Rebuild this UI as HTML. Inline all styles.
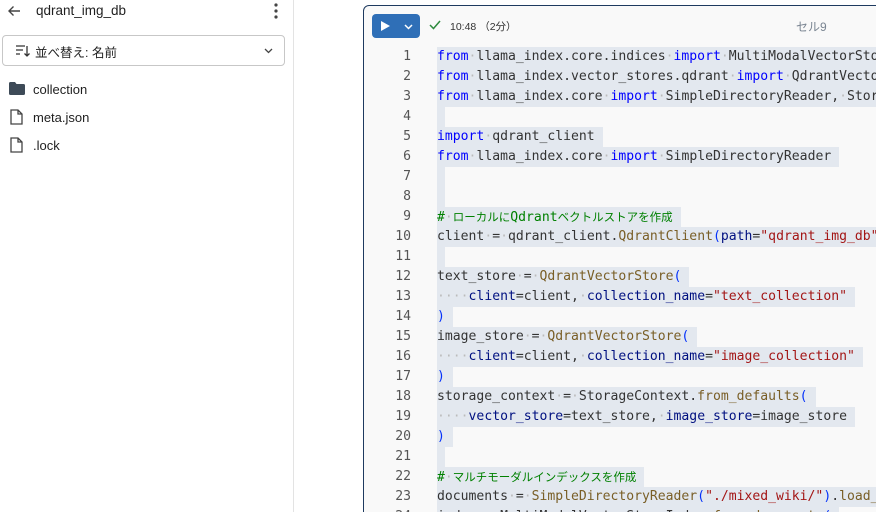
<!DOCTYPE html>
<html><head><meta charset="utf-8"><style>
*{margin:0;padding:0;box-sizing:border-box}
html,body{width:876px;height:512px;overflow:hidden}
body{background:#fff;font-family:"Liberation Sans","Noto Sans CJK JP",sans-serif;position:relative;color:#1f1f1f}
.left{position:absolute;left:0;top:0;width:294px;height:512px;border-right:1px solid #e3e3e3;background:#fff}
.title{position:absolute;left:36px;top:3px;font-size:13.5px;color:#1f1f1f}
.sort{position:absolute;left:2px;top:35px;width:283px;height:31px;border:1px solid #c7c7c7;border-radius:4px}
.sort span{position:absolute;left:32px;top:6px;font-size:12.5px}
.item{position:absolute;left:33px;font-size:13px}
.clip{position:absolute;left:0;top:0;width:876px;height:512px;overflow:hidden}
.cell{position:absolute;left:363px;top:5px;width:600px;height:600px;border:1.5px solid #1e3a5f;border-radius:6px;background:#f9f9f9}
.run{position:absolute;left:372px;top:14px;width:48px;height:24px;background:#2f6fb7;border-radius:4px}
.code{position:absolute;left:0;top:47px;font-family:"DejaVu Sans Mono","Noto Sans CJK JP",monospace;font-size:13.1px}
.ln{position:absolute;left:380px;width:31px;text-align:right;color:#555;height:20px;line-height:20px}
.cl{position:absolute;left:437px;height:20px;line-height:20px;white-space:pre;background:#e3e8ef;padding-right:8px;color:#333}
.e{width:8px;padding:0}
.j{font-size:11.5px}
.k{color:#0000ff}.f{color:#795e26}.p{color:#001080}.s{color:#a31515}.c{color:#008000}.b{color:#0431fa}.d{color:#bbb}
</style></head><body>
<div class="left">
<svg style="position:absolute;left:7px;top:5px" width="14" height="12" viewBox="0 0 14 12"><path d="M13 6H2M6.5 1.5L2 6l4.5 4.5" stroke="#444" stroke-width="1.4" fill="none"/></svg>
<div class="title">qdrant_img_db</div>
<svg style="position:absolute;left:274px;top:3px" width="4" height="16"><circle cx="2" cy="2" r="1.6" fill="#444"/><circle cx="2" cy="8" r="1.6" fill="#444"/><circle cx="2" cy="14" r="1.6" fill="#444"/></svg>
<div class="sort">
<svg style="position:absolute;left:12px;top:8px" width="16" height="14" viewBox="0 0 16 14"><path d="M1 2h9M1 6h7M1 10h4M12 2v10M9.5 9.5L12 12l2.5-2.5" stroke="#333" stroke-width="1.3" fill="none"/></svg>
<span>並べ替え: 名前</span>
<svg style="position:absolute;left:261px;top:12px" width="9" height="6"><path d="M1 1l3.5 3.5L8 1" stroke="#444" stroke-width="1.3" fill="none"/></svg>
</div>
<svg style="position:absolute;left:9px;top:82px" width="16" height="13"><path d="M0 1.5Q0 0 1.5 0H6l1.5 2H14.5Q16 2 16 3.5V11.5Q16 13 14.5 13H1.5Q0 13 0 11.5Z" fill="#3d4a57"/></svg>
<div class="item" style="top:82px">collection</div>
<svg style="position:absolute;left:10px;top:109px" width="13" height="16"><path d="M1 1h7l4 4v10H1Z M8 1v4h4" stroke="#444" stroke-width="1.3" fill="none"/></svg>
<div class="item" style="top:110px">meta.json</div>
<svg style="position:absolute;left:10px;top:137px" width="13" height="16"><path d="M1 1h7l4 4v10H1Z M8 1v4h4" stroke="#444" stroke-width="1.3" fill="none"/></svg>
<div class="item" style="top:138px">.lock</div>
</div>
<div class="clip">
<div class="cell"></div>
<div class="run">
<svg style="position:absolute;left:9px;top:7px" width="9" height="10"><path d="M0 0L9 5L0 10Z" fill="#fff"/></svg>
<svg style="position:absolute;left:32px;top:10px" width="9" height="6"><path d="M1 1l3.5 3.5L8 1" stroke="#fff" stroke-width="1.5" fill="none"/></svg>
</div>
<svg style="position:absolute;left:429px;top:20px" width="12" height="10"><path d="M1 5l3.5 3.5L11 1" stroke="#2e8b3e" stroke-width="1.5" fill="none"/></svg>
<div style="position:absolute;left:450px;top:19px;font-size:10.5px;color:#333">10:48 （2分）</div>
<div style="position:absolute;left:796px;top:18px;font-size:12px;color:#7a8592">セル9</div>
<div class="code">
<div class="ln" style="top:0">1</div><div class="cl" style="top:0"><span class="k">from</span><span class="d">·</span>llama_index.core.indices<span class="d">·</span><span class="k">import</span><span class="d">·</span>MultiModalVectorStoreIndex</div>
<div class="ln" style="top:20px">2</div><div class="cl" style="top:20px"><span class="k">from</span><span class="d">·</span>llama_index.vector_stores.qdrant<span class="d">·</span><span class="k">import</span><span class="d">·</span>QdrantVectorStore</div>
<div class="ln" style="top:40px">3</div><div class="cl" style="top:40px"><span class="k">from</span><span class="d">·</span>llama_index.core<span class="d">·</span><span class="k">import</span><span class="d">·</span>SimpleDirectoryReader,<span class="d">·</span>StorageContext</div>
<div class="ln" style="top:60px">4</div><div class="cl e" style="top:60px"> </div>
<div class="ln" style="top:80px">5</div><div class="cl" style="top:80px"><span class="k">import</span><span class="d">·</span>qdrant_client</div>
<div class="ln" style="top:100px">6</div><div class="cl" style="top:100px"><span class="k">from</span><span class="d">·</span>llama_index.core<span class="d">·</span><span class="k">import</span><span class="d">·</span>SimpleDirectoryReader</div>
<div class="ln" style="top:120px">7</div><div class="cl e" style="top:120px"> </div>
<div class="ln" style="top:140px">8</div><div class="cl e" style="top:140px"> </div>
<div class="ln" style="top:160px">9</div><div class="cl c" style="top:160px">#<span class="d">·</span><span class="j">ローカルに</span>Qdrant<span class="j">ベクトルストアを作成</span></div>
<div class="ln" style="top:180px">10</div><div class="cl" style="top:180px">client<span class="d">·</span>=<span class="d">·</span>qdrant_client.<span class="f">QdrantClient</span><span class="b">(</span><span class="p">path</span>=<span class="s">"qdrant_img_db"</span><span class="b">)</span></div>
<div class="ln" style="top:200px">11</div><div class="cl e" style="top:200px"> </div>
<div class="ln" style="top:220px">12</div><div class="cl" style="top:220px">text_store<span class="d">·</span>=<span class="d">·</span><span class="f">QdrantVectorStore</span><span class="b">(</span></div>
<div class="ln" style="top:240px">13</div><div class="cl" style="top:240px"><span class="d">····</span><span class="p">client</span>=client,<span class="d">·</span><span class="p">collection_name</span>=<span class="s">"text_collection"</span></div>
<div class="ln" style="top:260px">14</div><div class="cl" style="top:260px"><span class="b">)</span></div>
<div class="ln" style="top:280px">15</div><div class="cl" style="top:280px">image_store<span class="d">·</span>=<span class="d">·</span><span class="f">QdrantVectorStore</span><span class="b">(</span></div>
<div class="ln" style="top:300px">16</div><div class="cl" style="top:300px"><span class="d">····</span><span class="p">client</span>=client,<span class="d">·</span><span class="p">collection_name</span>=<span class="s">"image_collection"</span></div>
<div class="ln" style="top:320px">17</div><div class="cl" style="top:320px"><span class="b">)</span></div>
<div class="ln" style="top:340px">18</div><div class="cl" style="top:340px">storage_context<span class="d">·</span>=<span class="d">·</span>StorageContext.<span class="f">from_defaults</span><span class="b">(</span></div>
<div class="ln" style="top:360px">19</div><div class="cl" style="top:360px"><span class="d">····</span><span class="p">vector_store</span>=text_store,<span class="d">·</span><span class="p">image_store</span>=image_store</div>
<div class="ln" style="top:380px">20</div><div class="cl" style="top:380px"><span class="b">)</span></div>
<div class="ln" style="top:400px">21</div><div class="cl e" style="top:400px"> </div>
<div class="ln" style="top:420px">22</div><div class="cl c" style="top:420px">#<span class="d">·</span><span class="j">マルチモーダルインデックスを作成</span></div>
<div class="ln" style="top:440px">23</div><div class="cl" style="top:440px">documents<span class="d">·</span>=<span class="d">·</span><span class="f">SimpleDirectoryReader</span><span class="b">(</span><span class="s">"./mixed_wiki/"</span><span class="b">)</span>.<span class="f">load_data</span><span class="b">()</span></div>
<div class="ln" style="top:460px">24</div><div class="cl" style="top:460px">index<span class="d">·</span>=<span class="d">·</span>MultiModalVectorStoreIndex.<span class="f">from_documents</span><span class="b">(</span></div>
</div>
</div>
</body></html>
